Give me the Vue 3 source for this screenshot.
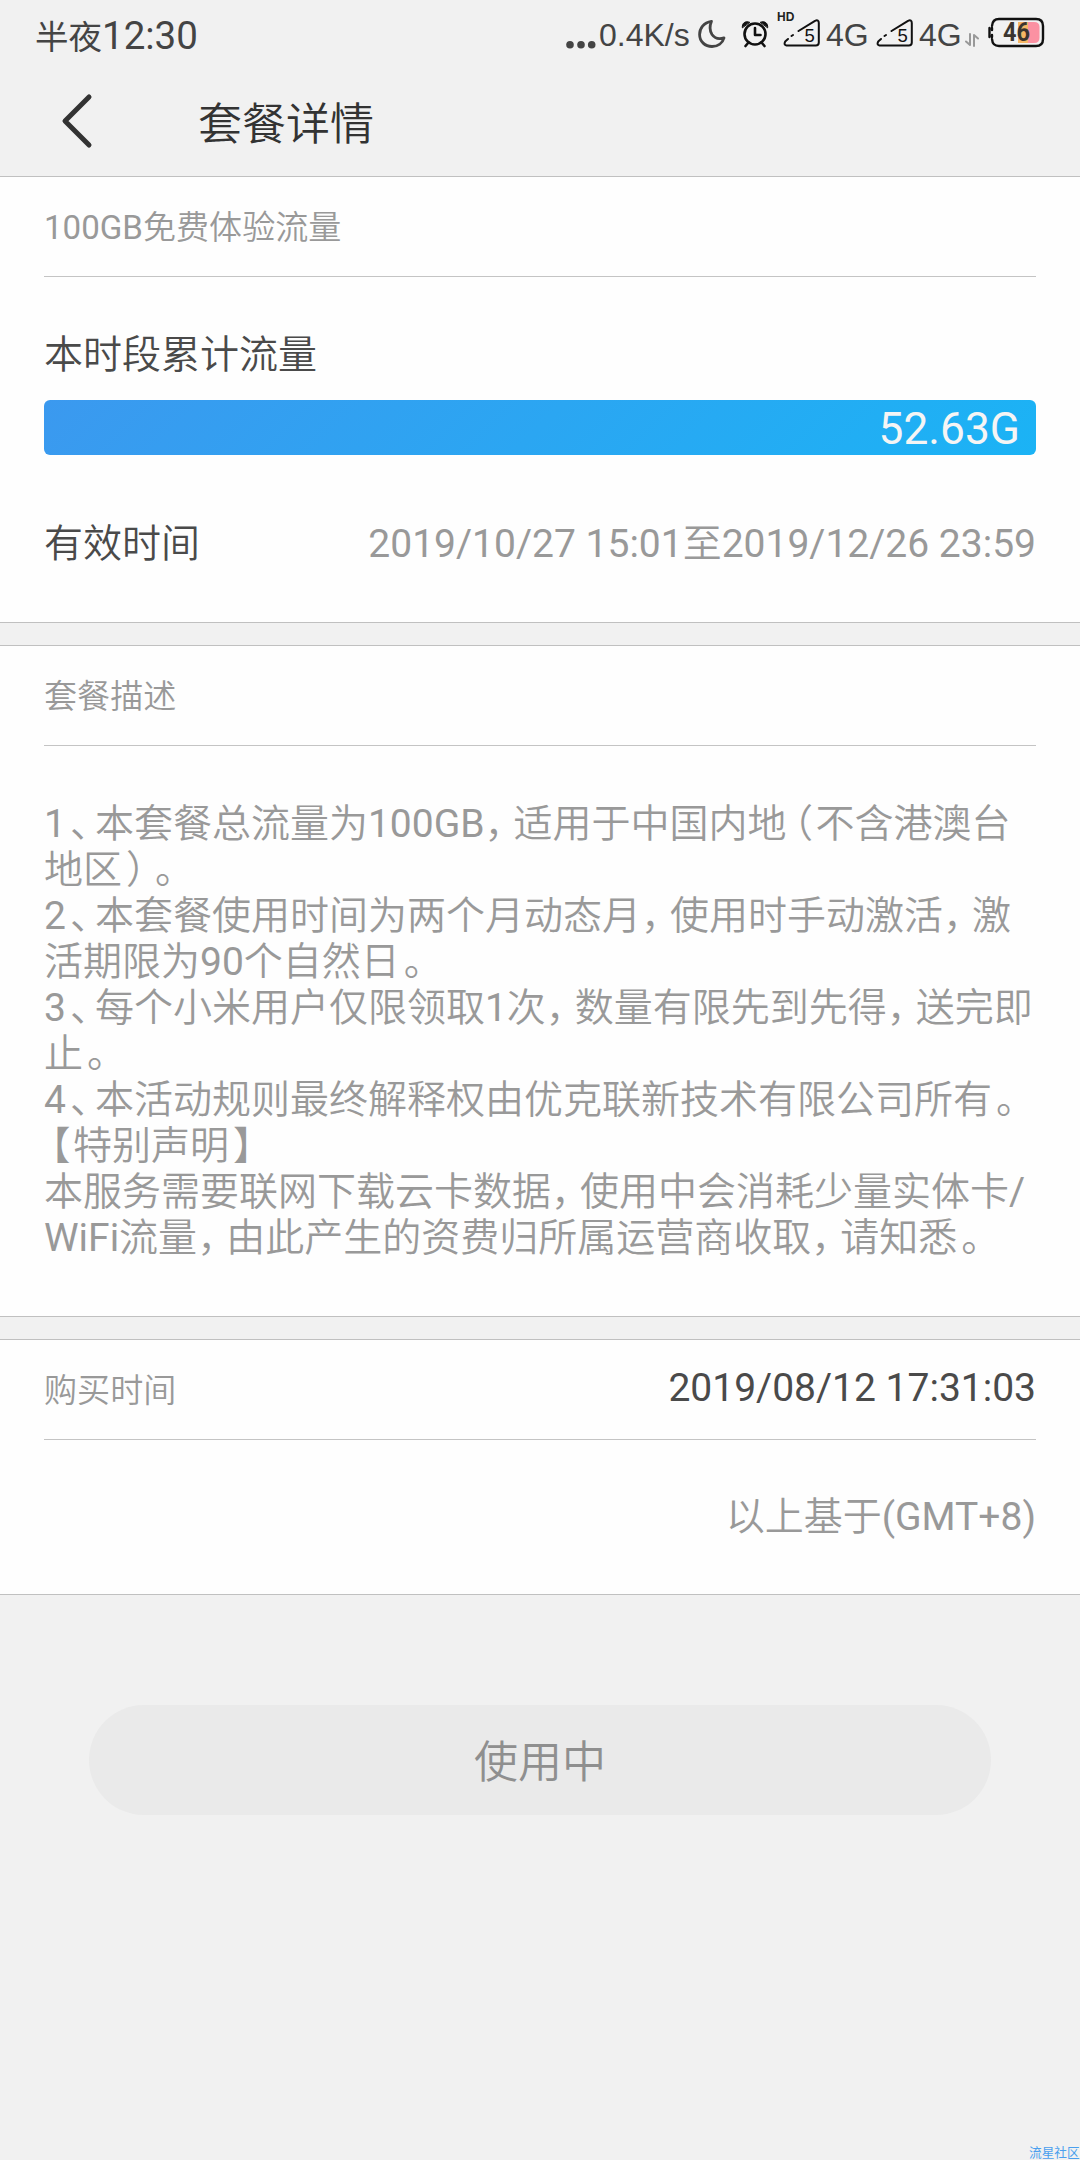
<template>
  <div class="page">
    <div class="status-bar">
      <div class="clock"><span class="clock-cn">半夜</span>12:30</div>
      <div class="status-icons">
        <svg class="dots" width="30" height="30" viewBox="0 0 30 30">
          <circle cx="4" cy="25.7" r="3.8" />
          <circle cx="15" cy="25.7" r="3.8" />
          <circle cx="25.7" cy="25.7" r="3.8" />
        </svg>
        <span class="speed">0.4K/s</span>
        <svg class="moon" width="28" height="30" viewBox="0 0 28 30">
          <path d="M13.5 2.3C5.5 3.5 1.6 9.5 1.6 15.5C1.6 22.5 7 27.5 14 27.5C20 27.5 24.5 24 26 18.8C21 20.5 16.5 19 14 15.5C11.5 11.5 11.5 7 13.5 2.3Z" />
        </svg>
        <svg class="alarm" width="28" height="30" viewBox="0 0 28 30">
          <circle cx="14" cy="15" r="10.5" />
          <path d="M14 9V16H19.5" />
          <path d="M7.5 23.5L4.5 27M20.5 23.5L23.5 27" />
          <path class="bell" d="M1.3 8.5C0.8 4 4.5 1.5 8.5 3.2ZM26.7 8.5C27.2 4 23.5 1.5 19.5 3.2Z" />
        </svg>
        <div v-for="sim in sims" :key="sim.id" class="sim" :class="sim.id">
          <span v-if="sim.hd" class="hd">HD</span>
          <svg width="38" height="30" viewBox="0 0 38 30">
            <path d="M15.5 12L32 1.8Q35.8 0.2 35.8 4V23.5Q35.8 26.5 32.8 26.5H3.5Q0.5 26 2.2 22.5L5 20M8.5 17L10 16" />
            <text x="21.5" y="23">5</text>
          </svg>
          <span class="net">4G</span>
        </div>
        <svg class="arrows" width="14" height="14" viewBox="0 0 14 14">
          <path d="M5 1V12L1 8.5M9 13V2L13 5.5" />
        </svg>
        <svg class="battery" width="58" height="32" viewBox="0 0 58 32">
          <path class="level" d="M30 5H46Q51.5 5 51.5 10V21Q51.5 26 46 26H30Z" />
          <rect class="level-low" x="30" y="5" width="10" height="21" />
          <path class="case" d="M4 9Q4.5 2 11 2H48Q55 2 55 9V22Q55 29 48 29H11Q4.5 29 4 22M1.5 11V20M4 11V13M4 18V20" />
          <text x="15" y="23.5" textLength="27" lengthAdjust="spacingAndGlyphs">46</text>
        </svg>
      </div>
    </div>

    <header class="nav">
      <svg class="back" width="32" height="56" viewBox="0 0 32 56">
        <path d="M28 4L4 28L28 52" />
      </svg>
      <h1>套餐详情</h1>
    </header>

    <section class="card usage">
      <div class="card-head">100GB免费体验流量</div>
      <div class="label">本时段累计流量</div>
      <div class="bar">
        <div class="bar-fill" :style="{ width: percent + '%' }">{{ used }}</div>
      </div>
      <div class="row">
        <span class="dark">有效时间</span>
        <span>2019/10/27 15:01至2019/12/26 23:59</span>
      </div>
    </section>

    <section class="card desc">
      <div class="card-head">套餐描述</div>
      <div class="desc-body">
        <p v-for="(line, i) in lines" :key="i">
          <span v-for="(part, j) in line" :key="j" :class="punctClass(part)">{{ part }}</span>
        </p>
      </div>
    </section>

    <section class="card buy">
      <div class="card-head">
        <span>购买时间</span>
        <span class="buy-time">2019/08/12 17:31:03</span>
      </div>
      <div class="zone">以上基于(GMT+8)</div>
    </section>

    <button class="btn-use" disabled>使用中</button>
    <div class="watermark">流星社区</div>
  </div>
</template>

<script setup>
import { ref, computed } from 'vue'

const used = ref('52.63G')
const percent = ref(100)

const sims = [
  { id: 'sim1', hd: true },
  { id: 'sim2', hd: false }
]

const description = [
  '1、本套餐总流量为100GB，适用于中国内地（不含港澳台',
  '地区）。',
  '2、本套餐使用时间为两个月动态月，使用时手动激活，激',
  '活期限为90个自然日。',
  '3、每个小米用户仅限领取1次，数量有限先到先得，送完即',
  '止。',
  '4、本活动规则最终解释权由优克联新技术有限公司所有。',
  '【特别声明】',
  '本服务需要联网下载云卡数据，使用中会消耗少量实体卡/',
  'WiFi流量，由此产生的资费归所属运营商收取，请知悉。'
]

// punctuation is narrower than a full character, so it gets its own span
const lines = computed(() =>
  description.map((text) => text.split(/([、，。（）【】])/).filter(Boolean))
)

function punctClass(part) {
  if ('（【'.includes(part)) return 'punct open'
  if (part === '，') return 'punct comma'
  if ('、。）】'.includes(part)) return 'punct'
  return ''
}
</script>

<style>
body {
  background: #f1f1f1;
}
</style>

<style scoped>
.page {
  position: relative;
  width: 1080px;
  height: 2160px;
  overflow: hidden;
  background: #f1f1f1;
  color: #999;
  font-family: Roboto, "Noto Sans CJK SC DemiLight", "Noto Sans CJK SC Light", "Noto Sans CJK SC", sans-serif;
  font-size: 39px;
  font-weight: 400;
  white-space: nowrap;
  text-spacing-trim: space-all;
}

.status-bar {
  display: flex;
  justify-content: space-between;
  height: 70px;
  padding: 0 34px 0 35px;
  box-sizing: border-box;
  color: #444;
}

.clock {
  font-size: 38.5px;
  line-height: 70px;
}

.clock-cn {
  font-family: "Noto Sans CJK SC", sans-serif;
  font-size: 33.5px;
}

.status-icons {
  display: flex;
  align-items: flex-start;
  padding-top: 19px;
  font-family: "Liberation Sans", Arial, sans-serif;
  font-size: 32px;
  line-height: 32px;
}

.status-icons svg {
  display: block;
  flex: none;
  fill: none;
  stroke: #111;
  stroke-width: 2;
  stroke-linecap: round;
  stroke-linejoin: round;
}

.status-icons .dots {
  margin-left: -1px;
  fill: #444;
  stroke: none;
}

.speed {
  width: 91px;
  margin: 0 8px 0 3px;
}

.status-icons .moon {
  stroke: #444;
  stroke-width: 2.8;
}

.status-icons .alarm {
  margin-left: 15px;
  stroke-width: 2.6;
}

.alarm .bell {
  fill: #111;
  stroke-width: 1;
}

.sim {
  position: relative;
  display: flex;
  margin-left: 14px;
}

.sim2 {
  margin-left: 9px;
}

.sim svg text {
  fill: #111;
  stroke: none;
  font-size: 18.5px;
}

.hd {
  position: absolute;
  top: -8px;
  left: -6px;
  color: #222;
  font-size: 12px;
  font-weight: bold;
  line-height: 12px;
}

.net {
  width: 41px;
  margin-left: 5px;
}

.status-icons .arrows {
  margin: 14px 0 0 5px;
  stroke: #999;
}

.status-icons .battery {
  margin: -2px 0 0 9px;
  stroke-width: 2.4;
}

.battery .level {
  fill: #fb91a2;
  stroke: none;
}

.battery .level-low {
  fill: #f6b765;
  stroke: none;
}

.battery text {
  fill: #3b3530;
  stroke: none;
  font-family: Roboto, sans-serif;
  font-size: 25px;
  font-weight: bold;
}

.nav {
  display: flex;
  align-items: center;
  height: 106px;
  padding-left: 61px;
  box-sizing: border-box;
}

.back {
  margin-bottom: 4px;
  fill: none;
  stroke: #333;
  stroke-width: 5;
  stroke-linecap: round;
  stroke-linejoin: round;
}

.nav h1 {
  margin: 3px 0 0 105px;
  color: #333;
  font-size: 44px;
  font-weight: inherit;
  line-height: 60px;
}

.card {
  box-sizing: border-box;
  margin-bottom: 22px;
  padding: 0 44px;
  border-top: 1px solid #c0c0c0;
  border-bottom: 1px solid #c0c0c0;
  background: #fefefe;
}

.card-head {
  display: flex;
  align-items: center;
  justify-content: space-between;
  height: 100px;
  padding-bottom: 4px;
  box-sizing: border-box;
  border-bottom: 1px solid #c4c4c4;
  font-size: 33.1px;
}

.usage {
  height: 447px;
}

.label {
  margin-top: 48px;
  color: #4a4a4a;
  line-height: 60px;
}

.bar {
  height: 55px;
  margin-top: 15px;
  overflow: hidden;
  border-radius: 6px;
}

.bar-fill {
  height: 55px;
  padding-right: 16px;
  box-sizing: border-box;
  background: linear-gradient(135deg, #3b99ef, #1bb3f5);
  color: #f5f5f5;
  font-size: 44.3px;
  line-height: 58px;
  text-align: right;
}

.row {
  display: flex;
  justify-content: space-between;
  margin-top: 59px;
  line-height: 60px;
}

.dark {
  color: #4a4a4a;
}

.desc {
  height: 672px;
}

.desc-body {
  padding-top: 55px;
}

.desc-body p {
  height: 46.05px;
  margin: 0;
  line-height: 46px;
}

/* half-width punctuation glyphs inside a 29px cell */
.punct {
  display: inline-block;
  width: 29px;
  padding-left: 4px;
  box-sizing: border-box;
  font-feature-settings: "halt";
}

.comma {
  padding-left: 0;
}

.open {
  padding-left: 7px;
}

.buy {
  height: 256px;
}

.buy-time {
  color: #4a4a4a;
  font-size: 39px;
}

.zone {
  margin-top: 47px;
  line-height: 60px;
  text-align: right;
}

.btn-use {
  display: block;
  width: 902px;
  height: 110px;
  margin: 110px auto 0;
  padding: 0 0 2px;
  border: none;
  border-radius: 55px;
  background: #eaeaea;
  color: #8f8f8f;
  font-family: inherit;
  font-size: 44px;
  font-weight: inherit;
}

.watermark {
  position: absolute;
  top: 2144px;
  left: 1029px;
  color: #4a9fee;
  font-family: "Noto Sans CJK SC", sans-serif;
  font-size: 12.7px;
  line-height: 16px;
}
</style>
